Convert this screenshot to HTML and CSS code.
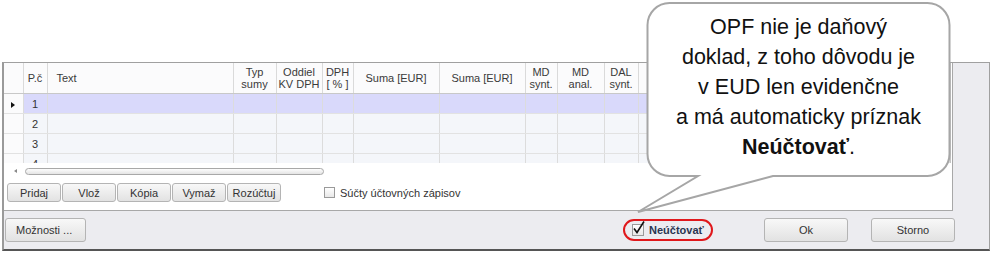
FILE: index.html
```html
<!DOCTYPE html>
<html lang="sk">
<head>
  <meta charset="UTF-8">
  <title>Doklad OPF</title>
  <link rel="stylesheet" href="styles.css">
</head>
<body>

  <div class="dialog">
    <div class="panel">
      <div class="grid">
        <table>
          <colgroup>
            <col style="width:19px"><col style="width:24px"><col style="width:186px"><col style="width:43px">
            <col style="width:46px"><col style="width:31px"><col style="width:86px"><col style="width:86px">
            <col style="width:32px"><col style="width:47px"><col style="width:34px"><col style="width:62px"><col>
          </colgroup>
          <tr class="head">
            <th></th><th>P.č</th><th class="left">Text</th><th>Typ<br>sumy</th>
            <th>Oddiel<br>KV DPH</th><th>DPH<br>[ % ]</th><th>Suma [EUR]</th><th>Suma [EUR]</th>
            <th>MD<br>synt.</th><th>MD<br>anal.</th><th>DAL<br>synt.</th><th></th><th></th>
          </tr>
          <tr class="sel">
            <td class="ind"><span class="arrow"></span></td><td>1</td><td></td><td></td><td></td><td></td>
            <td></td><td></td><td></td><td></td><td></td><td></td><td></td>
          </tr>
          <tr>
            <td class="ind"></td><td>2</td><td></td><td></td><td></td><td></td>
            <td></td><td></td><td></td><td></td><td></td><td></td><td></td>
          </tr>
          <tr>
            <td class="ind"></td><td>3</td><td></td><td></td><td></td><td></td>
            <td></td><td></td><td></td><td></td><td></td><td></td><td></td>
          </tr>
          <tr>
            <td class="ind"></td><td>4</td><td></td><td></td><td></td><td></td>
            <td></td><td></td><td></td><td></td><td></td><td></td><td></td>
          </tr>
        </table>
      </div>

      <div class="hscroll">
        <span class="left-arrow"></span>
        <div class="thumb"></div>
      </div>

      <div class="actions">
        <button class="btn small">Pridaj</button>
        <button class="btn small">Vlož</button>
        <button class="btn small">Kópia</button>
        <button class="btn small">Vymaž</button>
        <button class="btn small">Rozúčtuj</button>
        <label class="check"><span class="box"></span>Súčty účtovných zápisov</label>
      </div>
    </div>

    <div class="footer">
      <button class="btn options">Možnosti ...</button>
      <span class="flag">
        <span class="box on">
          <svg width="14" height="14" viewBox="0 0 14 14"><path d="M2 7.5 L5 11.5 L12 0.5" fill="none" stroke="#111" stroke-width="1.6"/></svg>
        </span>Neúčtovať
      </span>
      <button class="btn ok">Ok</button>
      <button class="btn storno">Storno</button>
    </div>
  </div>

  <svg class="bubble" width="990" height="253" viewBox="0 0 990 253">
    <path d="M669.5 3 H927.5 A22 22 0 0 1 949.5 25 V154 A22 22 0 0 1 927.5 176 H773 L638 212 L698 176 H669.5 A22 22 0 0 1 647.5 154 V25 A22 22 0 0 1 669.5 3 Z"
          fill="#fff" stroke="#a6a6a6" stroke-width="2"/>
  </svg>
  <div class="bubble-text">
    OPF nie je daňový<br>
    doklad, z toho dôvodu je<br>
    v EUD len evidenčne<br>
    a má automaticky príznak<br>
    <b>Neúčtovať</b>.
  </div>

</body>
</html>
```

FILE: styles.css
```css
body {
  margin: 0;
  background: #ffffff;
  font-family: 'Liberation Sans', Arial, sans-serif;
  font-size: 11px;
  color: #333;
  position: relative;
  width: 990px;
  height: 253px;
  overflow: hidden;
}

.dialog {
  margin: 62px 0 0 2px;
  width: 985px;
  height: 186px;
  background: #ececf0;
  border-top: 1px solid #a0a0a0;
  border-left: 2px solid #9a9a9a;
  border-right: 1px solid #a0a0a0;
  border-bottom: 2px solid #555;
}

.panel {
  width: 948px;
  height: 138px;
  padding-bottom: 9px;
  background: #ffffff;
  border-right: 1px solid #a8a8a8;
  border-bottom: 1px solid #a8a8a8;
}

.grid {
  width: 946px;
  height: 100px;
  overflow: hidden;
  border-right: 1px solid #c4c4c4;
}

.grid table {
  width: 946px;
  table-layout: fixed;
  border-collapse: collapse;
}

.grid th {
  height: 30px;
  padding: 0;
  font-weight: normal;
  line-height: 12px;
  color: #3a3a3a;
  background: #fbfbfc;
  border-right: 1px solid #dadada;
  border-bottom: 1px solid #c8c8c8;
  text-align: center;
}

.grid th.left {
  text-align: left;
  padding-left: 9px;
}

.grid td {
  height: 19px;
  padding: 0;
  text-align: center;
  color: #333;
  background: #f4f6fa;
  border-right: 1px solid #dcdcdc;
  border-bottom: 1px solid #e2e2e2;
}

.grid tr.sel td {
  background: #d9d9fb;
}

.grid td.ind,
.grid tr.sel td.ind {
  background: #fbfbfc;
}

.arrow {
  display: inline-block;
  width: 0;
  height: 0;
  border-top: 3px solid transparent;
  border-bottom: 3px solid transparent;
  border-left: 4px solid #111;
}

.hscroll {
  height: 16px;
  display: flex;
  align-items: center;
  padding-left: 10px;
}

.left-arrow {
  width: 0;
  height: 0;
  border-top: 2px solid transparent;
  border-bottom: 2px solid transparent;
  border-right: 3px solid #888;
  margin-right: 8px;
}

.thumb {
  width: 297px;
  height: 5px;
  border: 1px solid #a8a8a8;
  border-radius: 4px;
  background: linear-gradient(#fdfdfd, #e4e4e4);
}

.actions {
  display: flex;
  align-items: center;
  gap: 1px;
  margin-top: 4px;
  padding-left: 3px;
  height: 19px;
}

.btn {
  font-family: 'Liberation Sans', Arial, sans-serif;
  font-size: 11px;
  color: #333;
  padding: 0;
  border: 1px solid #b4b4b4;
  border-radius: 3px;
  background: linear-gradient(#f8f8f8, #e2e2e2);
}

.btn.small {
  width: 54px;
  height: 19px;
}

.check {
  display: flex;
  align-items: center;
  margin-left: 42px;
  color: #333;
}

.box {
  display: inline-block;
  width: 9px;
  height: 9px;
  margin-right: 5px;
  border: 1px solid #9a9a9a;
  background: linear-gradient(#ffffff, #e8e8e8);
  position: relative;
}

.box svg {
  position: absolute;
  left: -1px;
  top: -4px;
}

.footer {
  height: 38px;
  display: flex;
  align-items: center;
  padding-left: 1px;
}

.options {
  width: 81px;
  height: 24px;
  text-align: left;
  padding-left: 10px;
}

.flag {
  margin-left: 537px;
  width: 90px;
  height: 22px;
  display: flex;
  align-items: center;
  padding-left: 7px;
  box-sizing: border-box;
  border: 2px solid #e0181c;
  border-radius: 11px;
  font-weight: bold;
  color: #2a3550;
}

.flag .box {
  width: 10px;
  height: 10px;
}

.ok {
  margin-left: 51px;
  width: 84px;
  height: 24px;
}

.storno {
  margin-left: 23px;
  width: 84px;
  height: 24px;
}

.bubble {
  position: absolute;
  left: 0;
  top: 0;
}

.bubble-text {
  position: absolute;
  left: 647px;
  top: 12px;
  width: 303px;
  text-align: center;
  font-family: 'Liberation Sans', Arial, sans-serif;
  font-size: 21.5px;
  line-height: 30px;
  color: #111;
}
```
